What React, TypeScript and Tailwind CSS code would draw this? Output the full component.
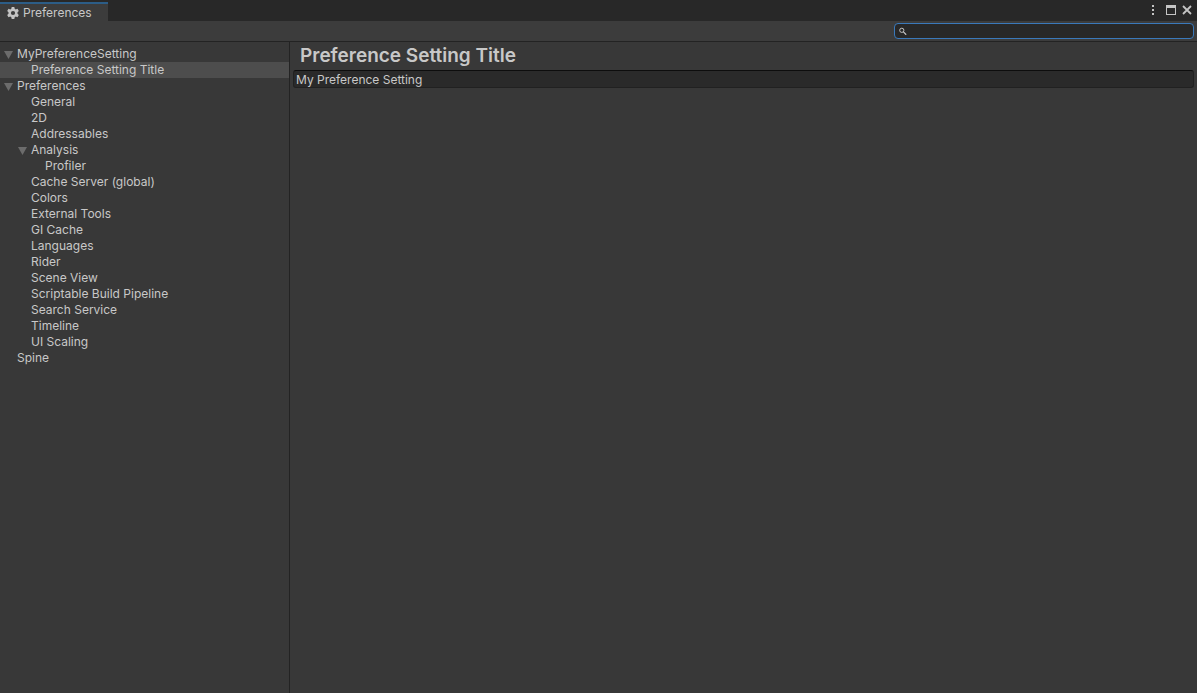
import { useState } from "react";

type Item = { label: string; depth: 0 | 1 | 2; open?: boolean };

const items: Item[] = [
  { label: "MyPreferenceSetting", depth: 0, open: true },
  { label: "Preference Setting Title", depth: 1 },
  { label: "Preferences", depth: 0, open: true },
  { label: "General", depth: 1 },
  { label: "2D", depth: 1 },
  { label: "Addressables", depth: 1 },
  { label: "Analysis", depth: 1, open: true },
  { label: "Profiler", depth: 2 },
  { label: "Cache Server (global)", depth: 1 },
  { label: "Colors", depth: 1 },
  { label: "External Tools", depth: 1 },
  { label: "GI Cache", depth: 1 },
  { label: "Languages", depth: 1 },
  { label: "Rider", depth: 1 },
  { label: "Scene View", depth: 1 },
  { label: "Scriptable Build Pipeline", depth: 1 },
  { label: "Search Service", depth: 1 },
  { label: "Timeline", depth: 1 },
  { label: "UI Scaling", depth: 1 },
  { label: "Spine", depth: 0 },
];

const indent = ["pl-1", "pl-[18px]", "pl-8"];

function GearIcon() {
  return (
    <svg viewBox="0 0 12 12" className="size-3 shrink-0" fill="#c4c4c4" aria-hidden="true">
      <path
        fillRule="evenodd"
        d="M4.7 0h2.6l.4 1.8 1 .6 1.8-.6L11.8 4l-1.3 1.3v1.4L11.8 8l-1.3 2.2-1.8-.6-1 .6-.4 1.8H4.7l-.4-1.8-1-.6-1.8.6L.2 8l1.3-1.3V5.3L.2 4l1.3-2.2 1.8.6 1-.6zM6 3.9a2.1 2.1 0 1 0 0 4.2 2.1 2.1 0 0 0 0-4.2z"
      />
    </svg>
  );
}

export default function App() {
  const [selected, setSelected] = useState("Preference Setting Title");
  const [query, setQuery] = useState("");
  const [value, setValue] = useState("My Preference Setting");

  return (
    <div className="flex min-h-screen flex-col bg-[#383838] font-['Inter',sans-serif] text-xs leading-4 text-[#c8c8c8]">
      <header className="flex h-[21px] items-stretch justify-between bg-[#282828]">
        <div className="flex pt-0.5">
          <button className="flex w-[108px] items-center gap-1 border-t-2 border-[#2c5d87] bg-[#3c3c3c] pl-[7px]">
            <GearIcon />
            <span>Preferences</span>
          </button>
        </div>
        <div className="flex items-center gap-0.5 pr-1 pb-px">
          <button aria-label="Menu" className="flex w-4 justify-center">
            <svg viewBox="0 0 2 10" className="h-2.5 w-0.5" fill="#c4c4c4">
              <path d="M0 0h2v2H0zM0 4h2v2H0zM0 8h2v2H0z" />
            </svg>
          </button>
          <button aria-label="Maximize" className="flex w-4 justify-center">
            <svg viewBox="0 0 10 10" className="size-2.5" fill="#c4c4c4">
              <path fillRule="evenodd" d="M0 0h10v10H0zM1 3v6h8V3z" />
            </svg>
          </button>
          <button aria-label="Close" className="flex w-3 justify-center">
            <svg viewBox="0 0 10 10" className="size-2.5" fill="none" stroke="#c4c4c4" strokeWidth="1.8">
              <path d="M1 1l8 8M9 1l-8 8" />
            </svg>
          </button>
        </div>
      </header>

      <div className="flex h-[21px] items-start justify-end border-b border-[#232323] bg-[#3c3c3c] pt-0.5 pr-[3px]">
        <label className="flex h-4 w-[300px] items-center gap-1 rounded border border-[#3a79bb] bg-[#282828] pl-1">
          <svg viewBox="0 0 8 8" className="size-2 shrink-0" fill="none" stroke="#c4c4c4" aria-hidden="true">
            <circle cx="2.8" cy="3.3" r="2.1" strokeWidth="1" />
            <path d="M4.4 4.9L7.2 7.7" strokeWidth="1.3" />
          </svg>
          <input
            type="text"
            aria-label="Search preferences"
            value={query}
            onChange={(e) => setQuery(e.target.value)}
            className="h-3 min-w-0 flex-1 bg-transparent outline-none"
          />
        </label>
      </div>

      <div className="flex flex-1">
        <nav className="w-[290px] shrink-0 border-r border-[#232323] pt-1">
          <ul>
            {items.map((item) => (
              <li key={item.label}>
                <button
                  onClick={() => setSelected(item.label)}
                  className={`flex h-4 w-full items-center gap-1 text-left ${indent[item.depth]} ${
                    selected === item.label ? "bg-[#4d4d4d]" : ""
                  }`}
                >
                  <svg viewBox="0 0 9 10" className="h-2.5 w-[9px] shrink-0" fill="#6c6c6c" aria-hidden="true">
                    {item.open && <path d="M0 2h9L4.5 10z" />}
                  </svg>
                  <span>{item.label}</span>
                </button>
              </li>
            ))}
          </ul>
        </nav>

        <main className="min-w-0 flex-1 px-[3px]">
          <h1 className="pl-[7px] text-[19px] leading-7 font-semibold">{selected}</h1>
          <input
            type="text"
            aria-label="My preference setting"
            value={value}
            onChange={(e) => setValue(e.target.value)}
            className="block h-[18px] w-full rounded-[3px] border border-[#212121] border-t-[#0d0d0d] bg-[#2a2a2a] px-0.5 outline-none"
          />
        </main>
      </div>
    </div>
  );
}
